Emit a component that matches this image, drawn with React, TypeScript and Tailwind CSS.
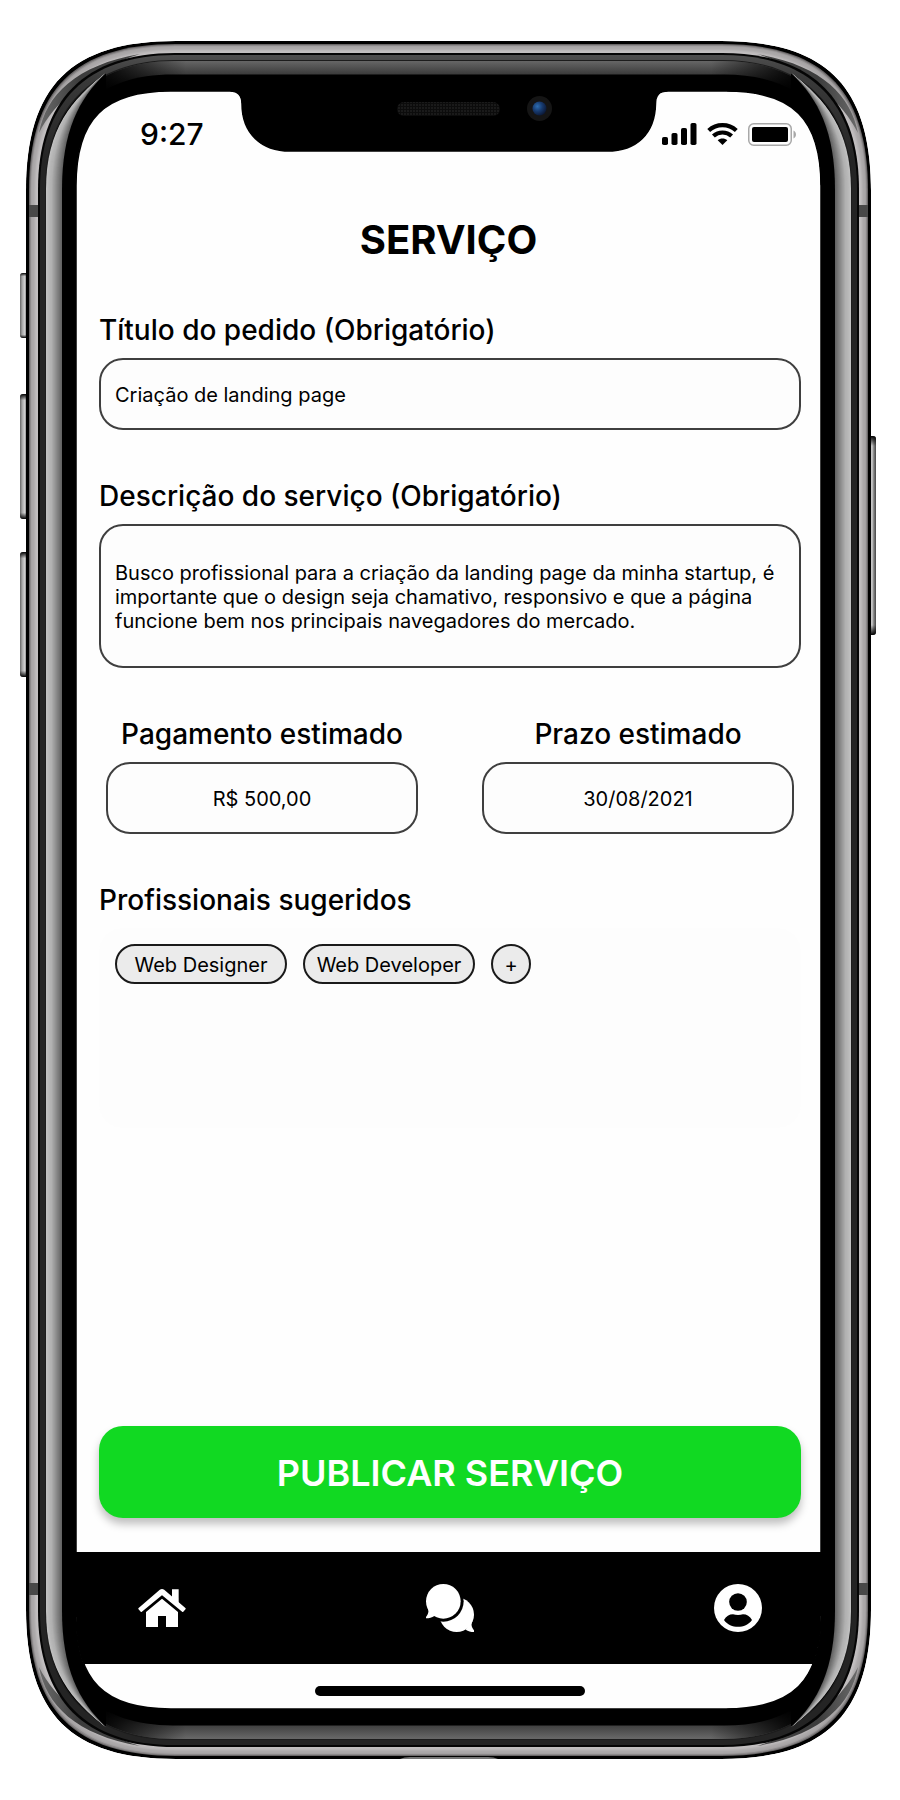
import { useState } from "react";

const W = 845;
const H = 1718;

/** Closed outline of the phone body, moved inwards by `i` pixels. */
function ring(i: number): string {
  const l = 150 - 1.1 * i;
  const c = i < 20 ? 45 + 0.15 * i : 48 - 0.66 * (i - 20);
  const r = W - i;
  const b = H - i;
  return [
    `M${i} ${i + l}`,
    `C${i} ${i + c} ${i + c} ${i} ${i + l} ${i}`,
    `H${r - l}`,
    `C${r - c} ${i} ${r} ${i + c} ${r} ${i + l}`,
    `V${b - l}`,
    `C${r} ${b - c} ${r - c} ${b} ${r - l} ${b}`,
    `H${i + l}`,
    `C${i + c} ${b} ${i} ${b - c} ${i} ${b - l}`,
    "Z",
  ].join("");
}

/** Screen opening with the notch cut out of its top edge. */
const OPENING =
  "M50 145C50 78 78 50 145 50H204C212 50 216 54 216 63C216 92 235 110 264 110H581C611 110 629 92 629.500 63C629.500 54 633 50 642 50H700C767 50 795 78 795 145V1573C795 1640 767 1668 700 1668H145C78 1668 50 1640 50 1573Z";

/** Left reflection; every step starts one pixel further in and shares the tips. */
function reflection(step: number): string {
  const x = 20 + step;
  const k = step / 16;
  const cy = 88 + 4 * k;
  const qx = 46 + 6 * k;
  return `M80 32C${qx} 58 ${x} ${cy} ${x} 148V1570C${x} ${H - cy} ${qx} ${H - 58} 80 ${H - 32}Z`;
}

function grey(from: number, to: number, t: number): string {
  const v = Math.round(from + (to - from) * t);
  return `rgb(${v},${v},${v})`;
}

const STEPS = Array.from({ length: 17 }, (_, n) => n);
const RIM = [0x6a, 0x8c, 0xa4, 0xaa, 0xac, 0xb2, 0xba, 0xc0, 0xc2];

function SideReflection() {
  return (
    <g>
      {STEPS.map((n) => (
        <path key={n} d={reflection(n)} fill={n === 16 ? "#000" : grey(192, 92, n < 5 ? n / 30 : (n - 3) / 13)} />
      ))}
    </g>
  );
}

function RimShade() {
  return (
    <g>
      <path d="M13 92C20 54 50 24 114 13C64 28 28 62 13 92Z" fill="url(#streak)" />
      <path d="M13 1626C20 1664 50 1694 114 1705C64 1690 28 1656 13 1626Z" fill="url(#streak)" />
      <rect x="3" y="164" width="9" height="12" fill="#484848" />
      <rect x="3" y="1542" width="9" height="12" fill="#484848" />
    </g>
  );
}

function Bezel() {
  return (
    <svg
      aria-hidden="true"
      viewBox={`0 0 ${W} ${H}`}
      preserveAspectRatio="none"
      className="pointer-events-none absolute inset-0 z-10 h-full w-full overflow-visible"
    >
      <defs>
        <linearGradient id="key" x1="0" x2="1">
          <stop offset="0" stopColor="#666" />
          <stop offset="0.25" stopColor="#a8a8a8" />
          <stop offset="0.5" stopColor="#cdcdcd" />
          <stop offset="0.7" stopColor="#8a8a8a" />
          <stop offset="1" stopColor="#444" />
        </linearGradient>
        <linearGradient id="keyEnds" x1="0" x2="0" y1="0" y2="1">
          <stop offset="0" stopColor="#000" />
          <stop offset="0.05" stopColor="#000" stopOpacity="0" />
          <stop offset="0.95" stopColor="#000" stopOpacity="0" />
          <stop offset="1" stopColor="#000" />
        </linearGradient>
        <linearGradient id="streak" x1="0" x2="1">
          <stop offset="0" stopColor="#6a6a6a" />
          <stop offset="0.4" stopColor="#3c3c3c" />
          <stop offset="1" stopColor="#444" />
        </linearGradient>
        <linearGradient id="darkRing" gradientUnits="userSpaceOnUse" x1="0" x2="0" y1="0" y2="120">
          <stop offset="0.1" stopColor="#505050" />
          <stop offset="0.3" stopColor="#3a3a3a" />
          <stop offset="1" stopColor="#242424" />
        </linearGradient>
        <linearGradient id="lip" gradientUnits="userSpaceOnUse" x1="0" x2="0" y1="0" y2={H}>
          <stop offset={20 / H} stopColor="#666" />
          <stop offset={33 / H} stopColor="#3c3c3c" />
          <stop offset={50 / H} stopColor="#000" />
          <stop offset={1668 / H} stopColor="#000" />
          <stop offset={1683 / H} stopColor="#3c3c3c" />
          <stop offset={1697 / H} stopColor="#666" />
        </linearGradient>
        <linearGradient id="lipFade" gradientUnits="userSpaceOnUse" x1="0" x2={W} y1="0" y2="0">
          <stop offset={78 / W} stopColor="#000" stopOpacity="0.9" />
          <stop offset={160 / W} stopColor="#000" stopOpacity="0" />
          <stop offset={685 / W} stopColor="#000" stopOpacity="0" />
          <stop offset={767 / W} stopColor="#000" stopOpacity="0.9" />
        </linearGradient>
        <pattern id="mesh" width="3" height="3" patternUnits="userSpaceOnUse">
          <rect width="3" height="3" fill="#0c0c0c" />
          <rect width="2" height="2" fill="#1a1a1a" />
        </pattern>
        <radialGradient id="lens" cx="0.35" cy="0.35" r="0.7">
          <stop offset="0" stopColor="#2d6db0" />
          <stop offset="0.5" stopColor="#173a6e" />
          <stop offset="1" stopColor="#0b1734" />
        </radialGradient>
        <clipPath id="shell">
          <path clipRule="evenodd" d={`${ring(0)}${OPENING}`} />
        </clipPath>
      </defs>

      {[
        [232, 65],
        [353, 125],
        [511, 125],
      ].map(([y, h]) => (
        <g key={y}>
          <rect x="-6" y={y} width="9" height={h} rx="3" fill="url(#key)" />
          <rect x="-6" y={y} width="9" height={h} rx="3" fill="url(#keyEnds)" />
        </g>
      ))}
      <rect x="842" y="395" width="8" height="199" rx="3" fill="url(#key)" />
      <rect x="842" y="395" width="8" height="199" rx="3" fill="url(#keyEnds)" />

      <g clipPath="url(#shell)">
        <path d={ring(0)} fill="#000" />
        {RIM.map((v, n) => (
          <path key={n} d={ring(3 + n)} fill={`rgb(${v},${v - 3},${v - 2})`} />
        ))}
        <RimShade />
        <g transform={`translate(${W} 0) scale(-1 1)`}>
          <RimShade />
        </g>
        <path d={ring(12)} fill="#050505" />
        <path d={ring(14)} fill="url(#darkRing)" />
        <path d={ring(19)} fill="#1c1c1c" />
        <path d={ring(20)} fill="url(#lip)" />
        <path d={ring(20)} fill="url(#lipFade)" />
        <path d={ring(33.5)} fill="#000" />
        <SideReflection />
        <g transform={`translate(${W} 0) scale(-1 1)`}>
          <SideReflection />
        </g>
      </g>
      <path d={OPENING} fill="none" stroke="#000" strokeWidth="1.500" />
      <path d="M374 1718Q378 1716 384 1716H462Q468 1716 472 1718Z" fill="#777" />

      <rect x="371" y="61" width="103" height="14" rx="7" fill="url(#mesh)" />
      <circle cx="513.500" cy="67.500" r="12.500" fill="#151515" />
      <circle cx="513.500" cy="67.500" r="7" fill="url(#lens)" />
    </svg>
  );
}

function SignalIcon() {
  return (
    <svg viewBox="0 0 35 22" className="h-[22px] w-[35px]" aria-hidden="true">
      <rect x="0" y="14" width="6" height="8" rx="1.800" />
      <rect x="9.500" y="10" width="6" height="12" rx="1.800" />
      <rect x="19" y="5" width="6" height="17" rx="1.800" />
      <rect x="28.500" y="0" width="6" height="22" rx="1.800" />
    </svg>
  );
}

function WifiIcon() {
  return (
    <svg viewBox="0 0 31 22" className="h-[22px] w-[31px]" aria-hidden="true">
      <g fill="none" stroke="#000" strokeWidth="4.200">
        <path d="M1.700 7.500C9.500 0.300 21.500 0.300 29.300 7.500" />
        <path d="M6.400 13C11.600 8.300 19.400 8.300 24.600 13" />
      </g>
      <path d="M15.500 22L10.700 17.200C13.400 14.900 17.600 14.900 20.300 17.200Z" />
    </svg>
  );
}

function BatteryIcon() {
  return (
    <svg viewBox="0 0 48 23" className="h-[23px] w-12" aria-hidden="true">
      <rect x="0.750" y="0.750" width="42.500" height="21.500" rx="5" fill="none" stroke="#a8a8a8" strokeWidth="1.500" />
      <rect x="4" y="4" width="36" height="15" rx="2" />
      <path d="M45.500 7.500C48.800 9 48.800 14 45.500 15.500Z" fill="#a8a8a8" />
    </svg>
  );
}

function HomeIcon() {
  return (
    <svg viewBox="0 0 144 144" className="size-12 fill-white" aria-hidden="true">
      <path d="M102 16H122V58L102 42Z" />
      <path
        d="M3.500 74L67 19.500Q72 16 77 19.500L140.500 74L134 81.500L72 30L10 81.500Z"
        stroke="#fff"
        strokeWidth="5"
        strokeLinejoin="round"
      />
      <path d="M24 84L72 44L120 84V129H84V96H60V129H24Z" />
    </svg>
  );
}

function ChatIcon() {
  return (
    <svg viewBox="0 0 144 144" className="size-12 fill-white" aria-hidden="true">
      <circle cx="92" cy="92" r="52" />
      <path d="M139 112C134 122 138 132 144 139V144C134 144 127 141 119 137Z" />
      <circle cx="52" cy="52" r="61" fill="#000" />
      <circle cx="52" cy="52" r="52" />
      <path d="M5 72C10 82 6 92 0 99V103C10 103 18 100 25 96L40 90Z" />
    </svg>
  );
}

function ProfileIcon() {
  return (
    <svg viewBox="0 0 144 144" className="size-12 fill-white" aria-hidden="true">
      <circle cx="72" cy="72" r="72" />
      <circle cx="72" cy="54" r="26.500" fill="#000" />
      <path
        d="M30 108C36 97 46 91 57 91Q64 93 72 93Q80 93 87 91C98 91 108 97 114 108C104 122 88 128.500 72 128.500C56 128.500 40 122 30 108Z"
        fill="#000"
      />
    </svg>
  );
}

const LABEL = "text-[28px] leading-8 font-medium";
const BOX = "w-full rounded-3xl border-2 border-[#3f3f3f] bg-[#fdfdfd] px-3.5 text-xl leading-6 outline-none";
const FIELD = `${BOX} h-[72px] pt-0.5`;
const CHIP =
  "flex h-10 items-center justify-center rounded-full border-2 border-[#1a1a1a] bg-[#ebebeb] pt-0.5 text-xl leading-6";

export default function App() {
  const [title, setTitle] = useState("Criação de landing page");
  const [description, setDescription] = useState(
    "Busco profissional para a criação da landing page da minha startup, é importante que o design seja chamativo, responsivo e que a página funcione bem nos principais navegadores do mercado.",
  );
  const [payment, setPayment] = useState("R$ 500,00");
  const [deadline, setDeadline] = useState("30/08/2021");

  return (
    <div className="flex min-h-screen flex-col bg-white py-[41px] pr-[29px] pl-[26px] font-['Inter',sans-serif] text-black">
      <div className="relative flex flex-1 flex-col p-[50px]">
        <Bezel />
        <div className="flex flex-1 flex-col rounded-[60px] bg-[#fefefe]">
          <header className="flex items-center justify-between pt-[27px] pr-[25px] pl-16">
            <time className="text-[30px] leading-8 font-medium">9:27</time>
            <div className="flex items-center gap-2.5">
              <SignalIcon />
              <WifiIcon />
              <BatteryIcon />
            </div>
          </header>

          <main className="flex flex-1 flex-col pt-[66px] pb-[34px]">
            <h1 className="text-center text-[40px] leading-[48px] font-bold">SERVIÇO</h1>

            <form
              className="flex flex-1 flex-col gap-[50px] pt-[50px] pr-5 pl-[23px]"
              onSubmit={(e) => e.preventDefault()}
            >
              <div className="flex flex-col gap-3">
                <label htmlFor="titulo" className={LABEL}>
                  Título do pedido (Obrigatório)
                </label>
                <input
                  id="titulo"
                  required
                  value={title}
                  onChange={(e) => setTitle(e.target.value)}
                  className={FIELD}
                />
              </div>

              <div className="flex flex-col gap-3">
                <label htmlFor="descricao" className={LABEL}>
                  Descrição do serviço (Obrigatório)
                </label>
                <textarea
                  id="descricao"
                  required
                  value={description}
                  onChange={(e) => setDescription(e.target.value)}
                  className={`${BOX} block h-36 resize-none overflow-hidden pt-[35px]`}
                />
              </div>

              <div className="grid grid-cols-2 gap-16 px-[7px]">
                <div className="flex flex-col gap-3">
                  <label htmlFor="pagamento" className={`${LABEL} text-center`}>
                    Pagamento estimado
                  </label>
                  <input
                    id="pagamento"
                    value={payment}
                    onChange={(e) => setPayment(e.target.value)}
                    className={`${FIELD} text-center`}
                  />
                </div>
                <div className="flex flex-col gap-3">
                  <label htmlFor="prazo" className={`${LABEL} text-center`}>
                    Prazo estimado
                  </label>
                  <input
                    id="prazo"
                    value={deadline}
                    onChange={(e) => setDeadline(e.target.value)}
                    className={`${FIELD} text-center`}
                  />
                </div>
              </div>

              <section className="flex flex-col gap-3">
                <h2 className={LABEL}>Profissionais sugeridos</h2>
                <div className="flex min-h-[200px] flex-wrap content-start gap-4 rounded-3xl bg-[#fdfdfd] p-4">
                  <button type="button" className={`${CHIP} w-[172px]`}>
                    Web Designer
                  </button>
                  <button type="button" className={`${CHIP} w-[172px]`}>
                    Web Developer
                  </button>
                  <button type="button" className={`${CHIP} w-10`}>
                    +
                  </button>
                </div>
              </section>

              <button
                type="submit"
                className="mt-auto h-[92px] rounded-3xl bg-[#11d922] pt-0.5 text-4xl font-semibold text-white shadow-[0_6px_8px_rgba(0,0,0,0.25)]"
              >
                PUBLICAR SERVIÇO
              </button>
            </form>
          </main>

          <nav className="flex h-28 items-center justify-between bg-black pr-[59px] pl-[62px]">
            <a href="#inicio" aria-label="Início">
              <HomeIcon />
            </a>
            <a href="#mensagens" aria-label="Mensagens">
              <ChatIcon />
            </a>
            <a href="#perfil" aria-label="Perfil">
              <ProfileIcon />
            </a>
          </nav>

          <div className="flex h-[45px] items-center justify-center pt-[9px] pl-[3px]">
            <div className="h-2.5 w-[270px] rounded-full bg-black" />
          </div>
        </div>
      </div>
    </div>
  );
}
